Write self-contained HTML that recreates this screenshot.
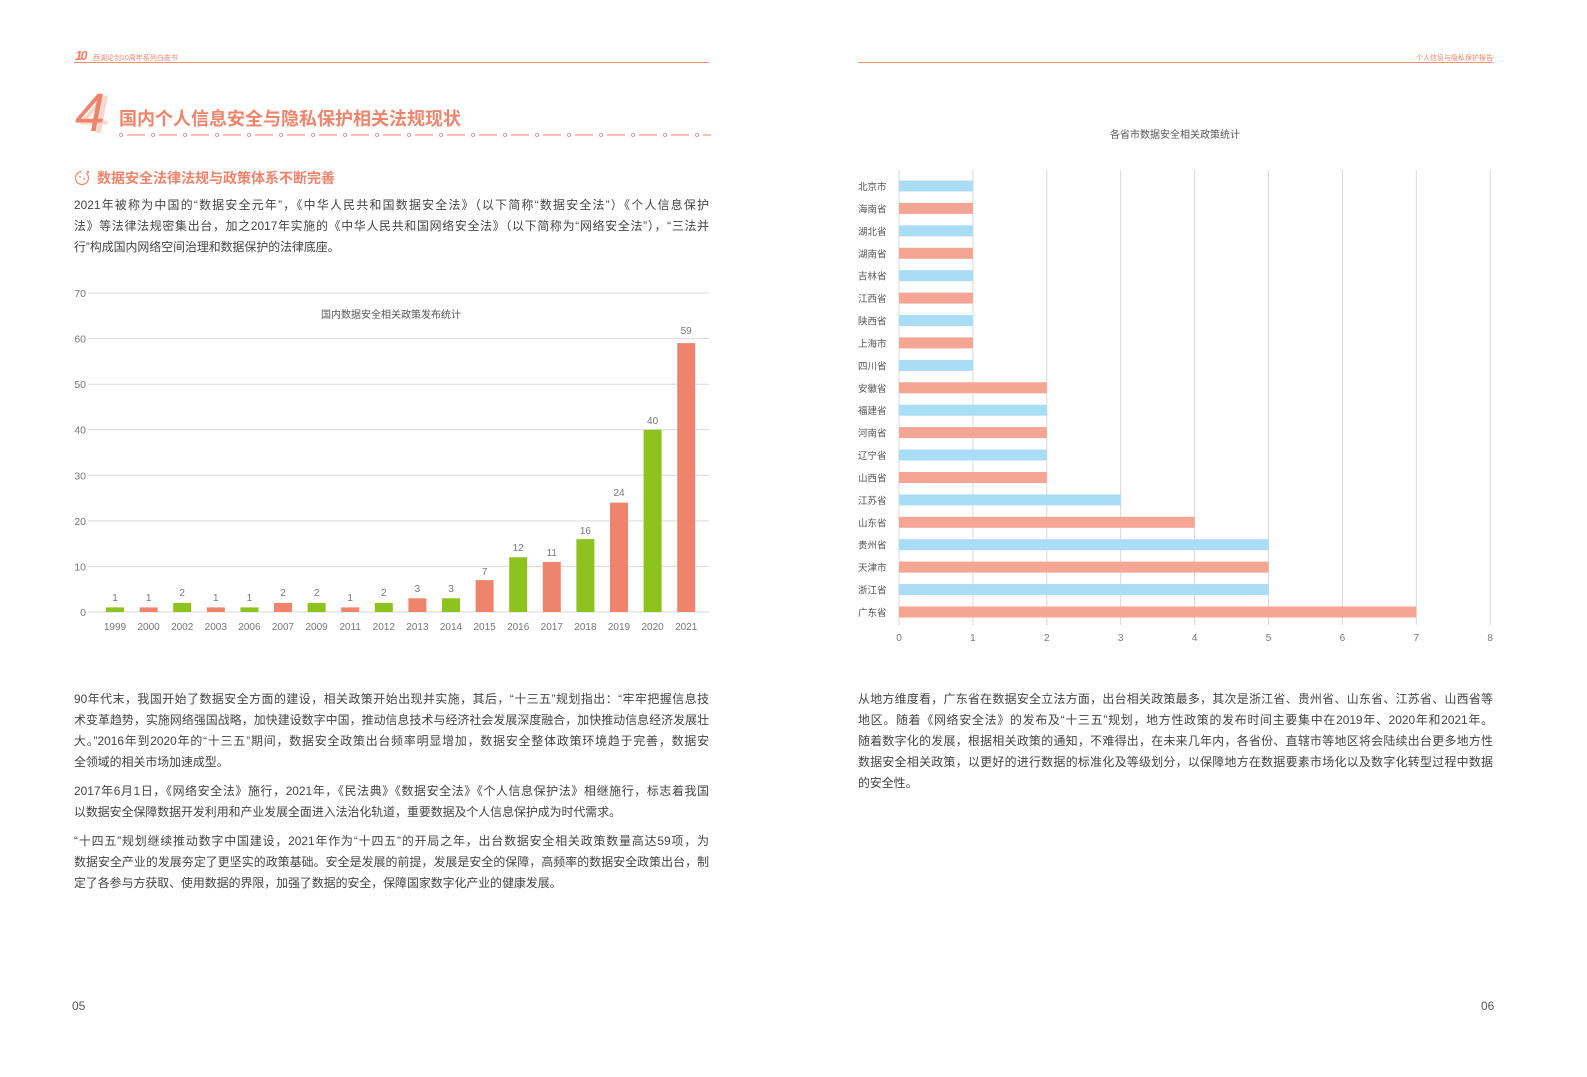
<!DOCTYPE html>
<html><head><meta charset="utf-8"><style>
html,body{margin:0;padding:0;background:#fff;}
body{width:1587px;height:1077px;position:relative;overflow:hidden;font-family:"Liberation Sans","Noto Sans CJK SC",sans-serif;color:#444;}
.l{position:absolute;font-size:11.9px;line-height:16px;white-space:nowrap;text-align:justify;text-align-last:justify;}
.L{left:74px;width:635px;}
.R{left:858px;width:635px;}
.nj{text-align-last:left;}
.a{position:absolute;}
</style></head><body>
<!-- headers -->
<div class="a" style="left:75px;top:48px;font-size:13px;font-weight:bold;font-style:italic;color:#ef846c;letter-spacing:-2px;">10</div>
<div class="a" style="left:93px;top:53px;font-size:7px;color:#ef846c;">西湖论剑10周年系列白皮书</div>
<div class="a" style="left:74px;top:62px;width:635px;height:1px;background:#f0907a;"></div>
<div class="a" style="left:1380px;top:53px;width:113px;text-align:right;font-size:7px;color:#ef846c;">个人信息与隐私保护报告</div>
<div class="a" style="left:858px;top:62px;width:635px;height:1px;background:#f0907a;"></div>

<!-- title -->
<div class="a" style="left:80px;top:84px;font-size:54px;font-style:italic;color:#fbd6cb;font-family:'Liberation Sans',sans-serif;">4</div>
<div class="a" style="left:75px;top:82px;font-size:54px;font-style:italic;color:#ef846c;font-family:'Liberation Sans',sans-serif;">4</div>
<div class="a" style="left:119px;top:105px;font-size:18px;font-weight:bold;color:#ef846c;">国内个人信息安全与隐私保护相关法规现状</div>
<svg class="a" style="left:117px;top:130px" width="594" height="10">
<defs><pattern id="p" width="32" height="10" patternUnits="userSpaceOnUse"><circle cx="4" cy="5" r="1.6" fill="none" stroke="#f19b86" stroke-width="1"/><line x1="10" y1="5" x2="28" y2="5" stroke="#f19b86" stroke-width="1.2"/></pattern></defs>
<rect width="594" height="10" fill="url(#p)"/></svg>

<svg class="a" style="left:74px;top:169px" width="18" height="18"><circle cx="8" cy="9" r="6.5" fill="none" stroke="#ef846c" stroke-width="1.2" stroke-dasharray="30 5"/><circle cx="6" cy="8" r="0.9" fill="#ef846c"/><circle cx="10" cy="10" r="0.9" fill="#ef846c"/><circle cx="14" cy="3" r="1.2" fill="#ef846c"/></svg>
<div class="a" style="left:97px;top:168px;font-size:14px;font-weight:bold;color:#ef846c;">数据安全法律法规与政策体系不断完善</div>

<div class="l L" style="top:197px">2021年被称为中国的“数据安全元年”，《中华人民共和国数据安全法》（以下简称“数据安全法”）《个人信息保护</div>
<div class="l L" style="top:218px">法》等法律法规密集出台，加之2017年实施的《中华人民共和国网络安全法》（以下简称为“网络安全法”），“三法并</div>
<div class="l L nj" style="top:239px">行”构成国内网络空间治理和数据保护的法律底座。</div>

<!-- left chart -->
<svg class="a" style="left:0;top:0" width="720" height="640" font-family="Liberation Sans, Noto Sans CJK SC, sans-serif">
<g stroke="#d9d9d9" stroke-width="1">
<line x1="88" y1="293" x2="709" y2="293"/><line x1="88" y1="338.6" x2="709" y2="338.6"/><line x1="88" y1="384.2" x2="709" y2="384.2"/><line x1="88" y1="429.7" x2="709" y2="429.7"/><line x1="88" y1="475.3" x2="709" y2="475.3"/><line x1="88" y1="520.9" x2="709" y2="520.9"/><line x1="88" y1="566.4" x2="709" y2="566.4"/><line x1="88" y1="612" x2="709" y2="612"/>
</g>
<g font-size="10.5" fill="#777" text-anchor="end">
<text x="86" y="297">70</text><text x="86" y="342.6">60</text><text x="86" y="388.2">50</text><text x="86" y="433.7">40</text><text x="86" y="479.3">30</text><text x="86" y="524.9">20</text><text x="86" y="570.4">10</text><text x="86" y="616">0</text>
</g>
<text x="391" y="318" font-size="10" fill="#555" text-anchor="middle">国内数据安全相关政策发布统计</text>
<g>
<rect x="106" y="607.4" width="18" height="4.6" fill="#8dc21f"/>
<rect x="139.6" y="607.4" width="18" height="4.6" fill="#ef846c"/>
<rect x="173.2" y="602.9" width="18" height="9.1" fill="#8dc21f"/>
<rect x="206.8" y="607.4" width="18" height="4.6" fill="#ef846c"/>
<rect x="240.4" y="607.4" width="18" height="4.6" fill="#8dc21f"/>
<rect x="274" y="602.9" width="18" height="9.1" fill="#ef846c"/>
<rect x="307.6" y="602.9" width="18" height="9.1" fill="#8dc21f"/>
<rect x="341.2" y="607.4" width="18" height="4.6" fill="#ef846c"/>
<rect x="374.8" y="602.9" width="18" height="9.1" fill="#8dc21f"/>
<rect x="408.4" y="598.3" width="18" height="13.7" fill="#ef846c"/>
<rect x="442" y="598.3" width="18" height="13.7" fill="#8dc21f"/>
<rect x="475.6" y="580.1" width="18" height="31.9" fill="#ef846c"/>
<rect x="509.2" y="557.3" width="18" height="54.7" fill="#8dc21f"/>
<rect x="542.8" y="561.9" width="18" height="50.1" fill="#ef846c"/>
<rect x="576.4" y="539.1" width="18" height="72.9" fill="#8dc21f"/>
<rect x="610" y="502.6" width="18" height="109.4" fill="#ef846c"/>
<rect x="643.6" y="429.7" width="18" height="182.3" fill="#8dc21f"/>
<rect x="677.2" y="343.1" width="18" height="268.9" fill="#ef846c"/>
</g>
<g font-size="10" fill="#777" text-anchor="middle">
<text x="115" y="601">1</text><text x="148.6" y="601">1</text><text x="182.2" y="596">2</text><text x="215.8" y="601">1</text><text x="249.4" y="601">1</text><text x="283" y="596">2</text><text x="316.6" y="596">2</text><text x="350.2" y="601">1</text><text x="383.8" y="596">2</text><text x="417.4" y="592">3</text><text x="451" y="592">3</text><text x="484.6" y="575">7</text><text x="518.2" y="551">12</text><text x="551.8" y="556">11</text><text x="585.4" y="534">16</text><text x="619" y="496">24</text><text x="652.6" y="424">40</text><text x="686.2" y="334">59</text>
</g>
<g font-size="10" fill="#777" text-anchor="middle">
<text x="115" y="630">1999</text><text x="148.6" y="630">2000</text><text x="182.2" y="630">2002</text><text x="215.8" y="630">2003</text><text x="249.4" y="630">2006</text><text x="283" y="630">2007</text><text x="316.6" y="630">2009</text><text x="350.2" y="630">2011</text><text x="383.8" y="630">2012</text><text x="417.4" y="630">2013</text><text x="451" y="630">2014</text><text x="484.6" y="630">2015</text><text x="518.2" y="630">2016</text><text x="551.8" y="630">2017</text><text x="585.4" y="630">2018</text><text x="619" y="630">2019</text><text x="652.6" y="630">2020</text><text x="686.2" y="630">2021</text>
</g>
</svg>

<!-- right chart -->
<svg class="a" style="left:0;top:0" width="1587" height="650" font-family="Liberation Sans, Noto Sans CJK SC, sans-serif">
<text x="1175" y="138" font-size="10" fill="#555" text-anchor="middle">各省市数据安全相关政策统计</text>
<g stroke="#d9d9d9" stroke-width="1">
<line x1="899" y1="170" x2="899" y2="625"/><line x1="972.9" y1="170" x2="972.9" y2="625"/><line x1="1046.8" y1="170" x2="1046.8" y2="625"/><line x1="1120.7" y1="170" x2="1120.7" y2="625"/><line x1="1194.6" y1="170" x2="1194.6" y2="625"/><line x1="1268.5" y1="170" x2="1268.5" y2="625"/><line x1="1342.4" y1="170" x2="1342.4" y2="625"/><line x1="1416.3" y1="170" x2="1416.3" y2="625"/><line x1="1490.2" y1="170" x2="1490.2" y2="625"/>
</g>
<g>
<rect x="899" y="180.5" width="73.9" height="11" fill="#a9dcf5"/>
<rect x="899" y="202.9" width="73.9" height="11" fill="#f4a594"/>
<rect x="899" y="225.3" width="73.9" height="11" fill="#a9dcf5"/>
<rect x="899" y="247.8" width="73.9" height="11" fill="#f4a594"/>
<rect x="899" y="270.2" width="73.9" height="11" fill="#a9dcf5"/>
<rect x="899" y="292.6" width="73.9" height="11" fill="#f4a594"/>
<rect x="899" y="315" width="73.9" height="11" fill="#a9dcf5"/>
<rect x="899" y="337.4" width="73.9" height="11" fill="#f4a594"/>
<rect x="899" y="359.9" width="73.9" height="11" fill="#a9dcf5"/>
<rect x="899" y="382.3" width="147.8" height="11" fill="#f4a594"/>
<rect x="899" y="404.7" width="147.8" height="11" fill="#a9dcf5"/>
<rect x="899" y="427.1" width="147.8" height="11" fill="#f4a594"/>
<rect x="899" y="449.5" width="147.8" height="11" fill="#a9dcf5"/>
<rect x="899" y="472" width="147.8" height="11" fill="#f4a594"/>
<rect x="899" y="494.4" width="221.7" height="11" fill="#a9dcf5"/>
<rect x="899" y="516.8" width="295.6" height="11" fill="#f4a594"/>
<rect x="899" y="539.2" width="369.5" height="11" fill="#a9dcf5"/>
<rect x="899" y="561.6" width="369.5" height="11" fill="#f4a594"/>
<rect x="899" y="584.1" width="369.5" height="11" fill="#a9dcf5"/>
<rect x="899" y="606.5" width="517.3" height="11" fill="#f4a594"/>
</g>
<g font-size="9.5" fill="#555">
<text x="858" y="190">北京市</text><text x="858" y="212.4">海南省</text><text x="858" y="234.8">湖北省</text><text x="858" y="257.3">湖南省</text><text x="858" y="279.7">吉林省</text><text x="858" y="302.1">江西省</text><text x="858" y="324.5">陕西省</text><text x="858" y="346.9">上海市</text><text x="858" y="369.4">四川省</text><text x="858" y="391.8">安徽省</text><text x="858" y="414.2">福建省</text><text x="858" y="436.6">河南省</text><text x="858" y="459">辽宁省</text><text x="858" y="481.5">山西省</text><text x="858" y="503.9">江苏省</text><text x="858" y="526.3">山东省</text><text x="858" y="548.7">贵州省</text><text x="858" y="571.1">天津市</text><text x="858" y="593.6">浙江省</text><text x="858" y="616">广东省</text>
</g>
<g font-size="10" fill="#777" text-anchor="middle">
<text x="899" y="641">0</text><text x="972.9" y="641">1</text><text x="1046.8" y="641">2</text><text x="1120.7" y="641">3</text><text x="1194.6" y="641">4</text><text x="1268.5" y="641">5</text><text x="1342.4" y="641">6</text><text x="1416.3" y="641">7</text><text x="1490.2" y="641">8</text>
</g>
</svg>

<!-- left lower text -->
<div class="l L" style="top:691px">90年代末，我国开始了数据安全方面的建设，相关政策开始出现并实施，其后，“十三五”规划指出：“牢牢把握信息技</div>
<div class="l L" style="top:712px">术变革趋势，实施网络强国战略，加快建设数字中国，推动信息技术与经济社会发展深度融合，加快推动信息经济发展壮</div>
<div class="l L" style="top:733px">大。”2016年到2020年的“十三五”期间，数据安全政策出台频率明显增加，数据安全整体政策环境趋于完善，数据安</div>
<div class="l L nj" style="top:754px">全领域的相关市场加速成型。</div>
<div class="l L" style="top:783px">2017年6月1日，《网络安全法》施行，2021年，《民法典》《数据安全法》《个人信息保护法》相继施行，标志着我国</div>
<div class="l L nj" style="top:804px">以数据安全保障数据开发利用和产业发展全面进入法治化轨道，重要数据及个人信息保护成为时代需求。</div>
<div class="l L" style="top:833px">“十四五”规划继续推动数字中国建设，2021年作为“十四五”的开局之年，出台数据安全相关政策数量高达59项，为</div>
<div class="l L" style="top:854px">数据安全产业的发展夯定了更坚实的政策基础。安全是发展的前提，发展是安全的保障，高频率的数据安全政策出台，制</div>
<div class="l L nj" style="top:875px">定了各参与方获取、使用数据的界限，加强了数据的安全，保障国家数字化产业的健康发展。</div>

<!-- right lower text -->
<div class="l R" style="top:691px">从地方维度看，广东省在数据安全立法方面，出台相关政策最多，其次是浙江省、贵州省、山东省、江苏省、山西省等</div>
<div class="l R" style="top:712px">地区。随着《网络安全法》的发布及“十三五”规划，地方性政策的发布时间主要集中在2019年、2020年和2021年。</div>
<div class="l R" style="top:733px">随着数字化的发展，根据相关政策的通知，不难得出，在未来几年内，各省份、直辖市等地区将会陆续出台更多地方性</div>
<div class="l R" style="top:754px">数据安全相关政策，以更好的进行数据的标准化及等级划分，以保障地方在数据要素市场化以及数字化转型过程中数据</div>
<div class="l R nj" style="top:775px">的安全性。</div>

<div class="a" style="left:72px;top:999px;font-size:12px;color:#555;">05</div>
<div class="a" style="left:1481px;top:999px;font-size:12px;color:#555;">06</div>
</body></html>
